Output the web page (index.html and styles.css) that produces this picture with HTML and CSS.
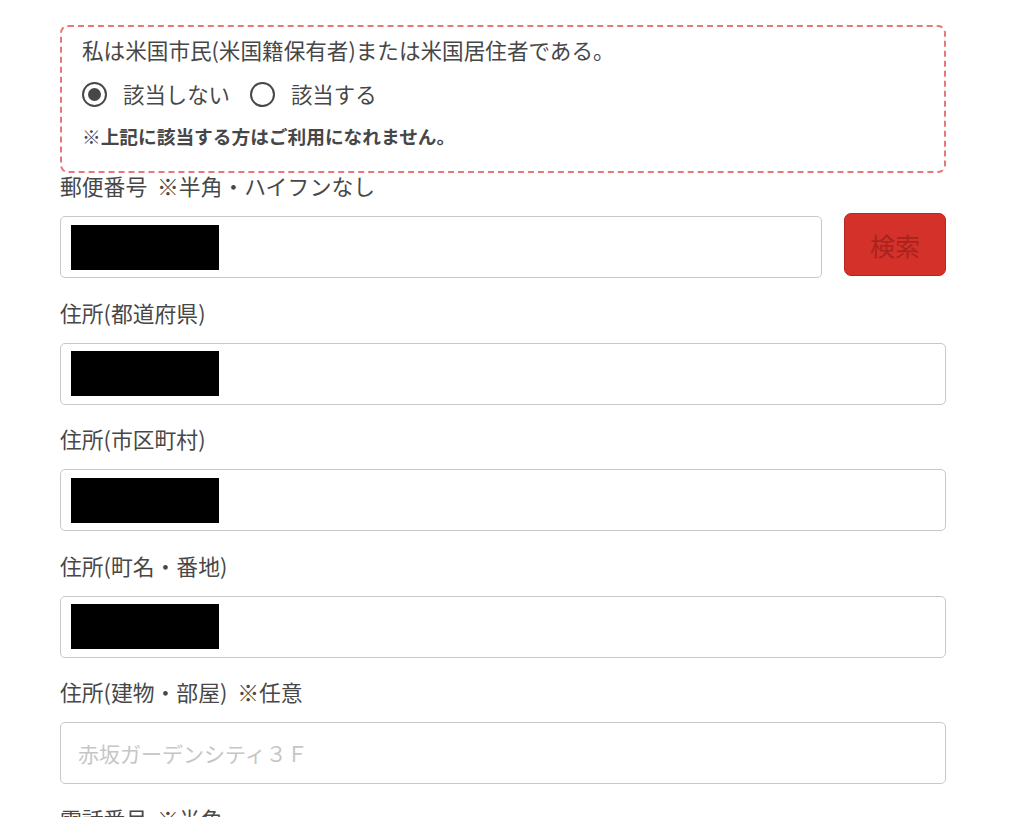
FILE: index.html
```html
<!DOCTYPE html>
<html lang="ja">
<head>
<meta charset="utf-8">
<link rel="stylesheet" href="styles.css">
</head>
<body>
<div class="form">
  <div class="notice">
    <p class="q">私は米国市民(米国籍保有者)または米国居住者である。</p>
    <div class="radios">
      <label class="radio"><span class="dot checked"></span><span>該当しない</span></label>
      <label class="radio"><span class="dot"></span><span>該当する</span></label>
    </div>
    <p class="warn">※上記に該当する方はご利用になれません。</p>
  </div>

  <div class="field first">
    <div class="label">郵便番号 ※半角・ハイフンなし</div>
    <div class="zip">
      <div class="input"><span class="mask"></span></div>
      <button class="search">検索</button>
    </div>
  </div>

  <div class="field">
    <div class="label">住所(都道府県)</div>
    <div class="input"><span class="mask"></span></div>
  </div>

  <div class="field">
    <div class="label">住所(市区町村)</div>
    <div class="input"><span class="mask"></span></div>
  </div>

  <div class="field">
    <div class="label">住所(町名・番地)</div>
    <div class="input"><span class="mask"></span></div>
  </div>

  <div class="field">
    <div class="label">住所(建物・部屋) ※任意</div>
    <div class="input"><span class="ph">赤坂ガーデンシティ３Ｆ</span></div>
  </div>

  <div class="field">
    <div class="label">電話番号 ※半角</div>
  </div>
</div>
</body>
</html>
```

FILE: styles.css
```css
html, body {
  margin: 0;
  padding: 0;
  background: #fff;
  overflow: hidden;
  height: 817px;
}
body {
  font-family: "Noto Sans CJK JP", "Noto Sans", sans-serif;
  color: #474747;
}
.form {
  width: 886px;
  margin-left: 60px;
  padding-top: 25px;
}
.notice {
  border: 2px dashed #e77878;
  border-radius: 8px;
  padding: 9px 20px 13px;
  height: 148px;
  box-sizing: border-box;
}
.q {
  margin: 0;
  font-size: 21.6px;
  line-height: 28px;
}
.radios {
  display: flex;
  align-items: center;
  gap: 20px;
  margin-top: 16px;
  height: 28px;
}
.radio {
  display: flex;
  align-items: center;
  gap: 16px;
  font-size: 21.4px;
  line-height: 28px;
}
.dot {
  width: 25px;
  height: 25px;
  border: 2px solid #474747;
  border-radius: 50%;
  box-sizing: border-box;
  display: flex;
  align-items: center;
  justify-content: center;
}
.dot.checked::after {
  content: "";
  width: 13px;
  height: 13px;
  border-radius: 50%;
  background: #474747;
}
.warn {
  margin: 16px 0 0;
  font-size: 18.7px;
  font-weight: bold;
  line-height: 24px;
}
.field {
  margin-bottom: 22.5px;
}
.field.first {
  margin-top: 1px;
}
.label {
  font-size: 21.8px;
  line-height: 24px;
  margin-bottom: 18px;
  word-spacing: 5px;
}
.input {
  height: 62px;
  border: 1px solid #c8c8c8;
  border-radius: 5px;
  box-sizing: border-box;
  display: flex;
  align-items: center;
  padding-left: 10px;
  flex: 1;
}
.mask {
  width: 148px;
  height: 45px;
  background: #000;
}
.ph {
  color: #c6c6c6;
  font-size: 21px;
  padding-left: 7px;
}
.zip {
  display: flex;
  gap: 22px;
  align-items: flex-start;
}
.search {
  width: 102px;
  height: 63px;
  margin-top: -3px;
  background: #d4312a;
  border: 1px solid #b82620;
  border-radius: 7px;
  color: #a8231d;
  font-family: "Noto Sans CJK JP", sans-serif;
  font-size: 25px;
}
```
